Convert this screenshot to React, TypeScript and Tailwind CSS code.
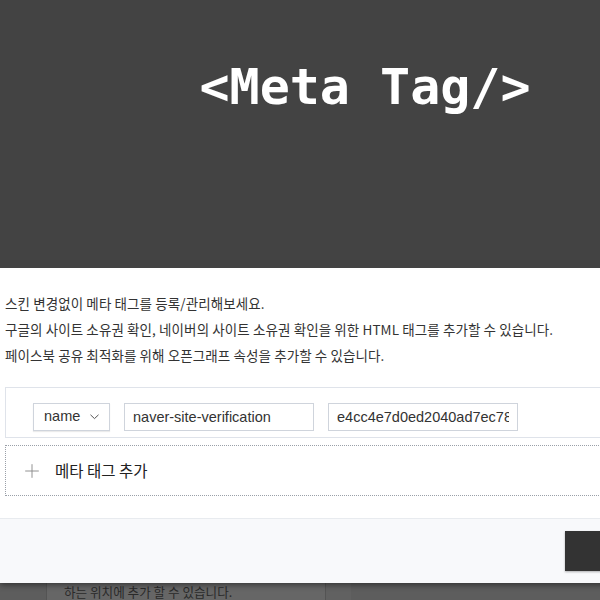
import { Plus } from "lucide-react";

const kr = { fontFamily: "'Noto Sans CJK KR', 'Noto Sans', sans-serif" };
const latin = { fontFamily: "'Liberation Sans', 'Noto Sans CJK KR', sans-serif" };

function Field({ value, width }: { value: string; width: string }) {
  return (
    <input
      readOnly
      value={value}
      className={`h-[28px] ${width} border border-[#cfd4dc] px-[8px] text-[14.5px] text-[#333] outline-none`}
      style={latin}
    />
  );
}

function MetaRow() {
  return (
    <div className="flex h-[51px] items-start gap-[14px] border border-[#dfe3ea] pl-[27px] pt-[15px]">
      <div
        className="flex h-[28px] w-[77px] items-center justify-between border border-[#cfd4dc] pl-[10px] pr-[10px] shadow-[0_1px_1px_rgba(0,0,0,0.08)]"
        style={latin}
      >
        <span className="text-[14.5px] text-[#333]">name</span>
        <svg width="9" height="6" viewBox="0 0 9 6" fill="none">
          <path d="M0.5 0.8 L4.5 4.6 L8.5 0.8" stroke="#555" strokeWidth="1" />
        </svg>
      </div>
      <Field value="naver-site-verification" width="w-[190px]" />
      <Field value="e4cc4e7d0ed2040ad7ec784c5d0cb2e1" width="w-[190px]" />
    </div>
  );
}

export default function App() {
  return (
    <div className="flex h-[600px] w-[600px] flex-col overflow-hidden bg-[#5d5d5d]" style={kr}>
      {/* modal */}
      <div className="relative z-10 w-[730px] shrink-0 shadow-[0_2px_6px_rgba(0,0,0,0.45)]">
        <div className="h-[268px] bg-[#434343] pt-[62px] text-center">
          <h1
            className="text-[50px] font-bold leading-none text-white"
            style={{ fontFamily: "'DejaVu Sans Mono', monospace" }}
          >
            &lt;Meta Tag/&gt;
          </h1>
        </div>

        <div className="bg-white px-[5px] pt-[22px] pb-[22px]">
          <div className="text-[13.5px] leading-[26px] tracking-[0.1px] text-[#333]">
            <p>스킨 변경없이 메타 태그를 등록/관리해보세요.</p>
            <p>구글의 사이트 소유권 확인, 네이버의 사이트 소유권 확인을 위한 HTML 태그를 추가할 수 있습니다.</p>
            <p>페이스북 공유 최적화를 위해 오픈그래프 속성을 추가할 수 있습니다.</p>
          </div>

          <div className="mt-[19px] flex flex-col gap-[7px]">
            <MetaRow />
            <button className="flex h-[51px] items-center gap-[12px] border border-dotted border-[#9aa0a8] pl-[15px] text-left">
              <Plus size={22} strokeWidth={1} className="text-[#888]" />
              <span className="text-[15.5px] text-[#222]">메타 태그 추가</span>
            </button>
          </div>
        </div>

        <div className="flex h-[65px] items-center border-t border-[#e8ebef] bg-[#f8f9fb] pl-[565px]">
          <button className="h-[40px] w-[120px] bg-[#333] shadow-[0_1px_2px_rgba(0,0,0,0.3)]" />
        </div>
      </div>

      {/* page behind the overlay */}
      <div className="flex flex-1 pl-[46px]">
        <div className="w-[280px] border-x border-[#545454] bg-[#666] pl-[17px] text-[12.6px] leading-[17px] text-[#2a2a2a]">
          하는 위치에 추가 할 수 있습니다.
        </div>
        <div className="w-[25px] bg-[#616161]" />
      </div>
    </div>
  );
}
